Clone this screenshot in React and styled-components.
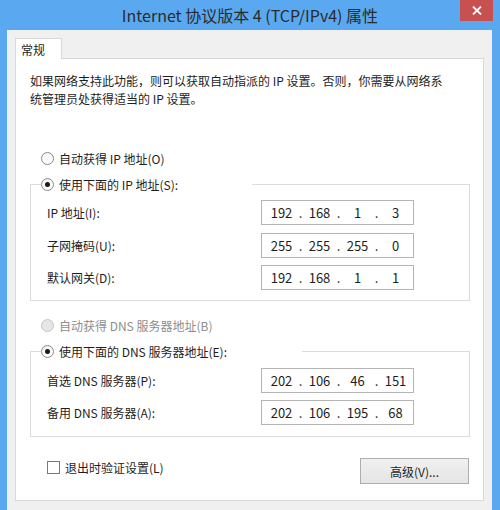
import styled, { createGlobalStyle } from "styled-components";

const FONT = `"Segoe UI", "Noto Sans CJK SC", "Noto Sans", sans-serif`;

const GlobalStyle = createGlobalStyle`
    html, body {
        margin: 0;
        padding: 0;
        background: #5aa9f0;
    }
    body {
        font-family: ${FONT};
        font-size: 12px;
        color: #1e1e1e;
    }
`;

const Window = styled.div`
    width: 500px;
    height: 510px;
    display: flex;
    flex-direction: column;
    background: #5aa9f0;
    overflow: hidden;
`;

const TitleBar = styled.div`
    position: relative;
    height: 30px;
    flex-shrink: 0;
    display: flex;
    align-items: center;
    justify-content: center;
`;

const TitleText = styled.span`
    font-size: 16px;
    color: #2b2b2b;
    margin-top: -1px;
    white-space: nowrap;
`;

const CloseButton = styled.div`
    position: absolute;
    top: 0;
    right: 7px;
    width: 33px;
    height: 21px;
    background: #c75050;
    display: flex;
    align-items: center;
    justify-content: center;

    svg {
        width: 10px;
        height: 9px;
    }
`;

const Client = styled.div`
    flex: 1;
    margin: 0 8px 0 7px;
    padding: 8px 8px 9px 8px;
    background: #f0f0f0;
    display: flex;
    flex-direction: column;
`;

const TabStrip = styled.div`
    display: flex;
    margin-bottom: -1px;
    position: relative;
    z-index: 1;
`;

const Tab = styled.div`
    width: 40px;
    height: 20px;
    padding-left: 5px;
    background: #fff;
    border: 1px solid #d9d9d9;
    border-bottom: none;
    font-size: 12px;
    line-height: 22px;
`;

const Panel = styled.div`
    flex: 1;
    background: #fff;
    border: 1px solid #d9d9d9;
    padding: 13px 13px 16px 14px;
    display: flex;
    flex-direction: column;
`;

const Intro = styled.p`
    margin: 0 0 41px 0;
    line-height: 18px;
    font-size: 12px;
`;

const OptionRow = styled.label`
    display: flex;
    align-items: center;
    height: 18px;
    padding-left: 11px;
    margin-top: ${(p) => p.$gap || 0}px;
    color: ${(p) => (p.$disabled ? "#8d8d8d" : "#1e1e1e")};
    white-space: nowrap;
`;

const RadioDot = styled.span`
    width: 11px;
    height: 11px;
    border-radius: 50%;
    border: 1px solid ${(p) => (p.$disabled ? "#c4c4c4" : "#8a8a8a")};
    background: ${(p) =>
        p.$disabled ? "#e6e6e6" : "linear-gradient(#f4f4f4, #ffffff)"};
    margin-right: 5px;
    display: flex;
    align-items: center;
    justify-content: center;
    flex-shrink: 0;

    &::after {
        content: "";
        width: 5px;
        height: 5px;
        border-radius: 50%;
        background: #1a1a1a;
        display: ${(p) => (p.$checked ? "block" : "none")};
    }
`;

const Group = styled.fieldset`
    margin: 8px 0 0 0;
    padding: ${(p) => p.$pt}px 0 ${(p) => p.$pb}px 0;
    border: 1px solid #dcdcdc;
    min-inline-size: 0;
    display: flex;
    flex-direction: column;
    gap: ${(p) => p.$rowGap}px;
`;

const GroupLegend = styled.legend`
    padding: 0;
    margin-left: 10px;
    width: ${(p) => p.$width}px;
    height: 18px;
    display: flex;
    align-items: center;
    background: #fff;
    white-space: nowrap;
`;

const FieldRow = styled.div`
    display: flex;
    align-items: center;
    height: 25px;
    padding-left: 16px;
`;

const FieldLabel = styled.span`
    width: 214px;
    flex-shrink: 0;
`;

const IpBox = styled.div`
    box-sizing: border-box;
    width: 153px;
    height: 25px;
    border: 1px solid #b4b4b4;
    display: flex;
    align-items: center;
    padding-left: 4px;
    font-size: 13px;
    color: #1e1e1e;
`;

const Octet = styled.span`
    width: 31px;
    text-align: center;
`;

const Dot = styled.span`
    width: 7px;
    text-align: center;
`;

const Footer = styled.div`
    display: flex;
    justify-content: space-between;
    align-items: flex-start;
    margin-top: 21px;
    padding-left: 17px;
    padding-right: 1px;
`;

const CheckRow = styled.label`
    display: flex;
    align-items: center;
    height: 18px;
`;

const CheckBox = styled.span`
    width: 11px;
    height: 11px;
    border: 1px solid #7a7a7a;
    background: #fff;
    margin-right: 5px;
    flex-shrink: 0;
`;

const Button = styled.div`
    width: 109px;
    height: 26px;
    box-sizing: border-box;
    border: 1px solid #adadad;
    background: linear-gradient(#f0f0f0, #e5e5e5);
    display: flex;
    align-items: center;
    justify-content: center;
    font-size: 12px;
`;

function IpAddress({ value }) {
    const parts = value.split(".");
    return (
        <IpBox>
            {parts.map((part, i) => (
                <span key={i} style={{ display: "contents" }}>
                    <Octet>{part}</Octet>
                    {i < parts.length - 1 && <Dot>.</Dot>}
                </span>
            ))}
        </IpBox>
    );
}

const IP_FIELDS = [
    ["IP 地址(I):", "192.168.1.3"],
    ["子网掩码(U):", "255.255.255.0"],
    ["默认网关(D):", "192.168.1.1"],
];

const DNS_FIELDS = [
    ["首选 DNS 服务器(P):", "202.106.46.151"],
    ["备用 DNS 服务器(A):", "202.106.195.68"],
];

export default function App() {
    return (
        <>
            <GlobalStyle />
            <Window>
                <TitleBar>
                    <TitleText>Internet 协议版本 4 (TCP/IPv4) 属性</TitleText>
                    <CloseButton aria-label="关闭">
                        <svg viewBox="0 0 10 9" fill="none" stroke="#fff" strokeWidth="1.8">
                            <path d="M1 0.5 L9 8.5 M9 0.5 L1 8.5" />
                        </svg>
                    </CloseButton>
                </TitleBar>
                <Client>
                    <TabStrip>
                        <Tab>常规</Tab>
                    </TabStrip>
                    <Panel>
                        <Intro>
                            如果网络支持此功能，则可以获取自动指派的 IP 设置。否则，你需要从网络系
                            <br />
                            统管理员处获得适当的 IP 设置。
                        </Intro>

                        <OptionRow>
                            <RadioDot />
                            自动获得 IP 地址(O)
                        </OptionRow>
                        <Group $pt={7} $pb={10} $rowGap={7.5}>
                            <GroupLegend $width={211}>
                                <RadioDot $checked />
                                使用下面的 IP 地址(S):
                            </GroupLegend>
                            {IP_FIELDS.map(([label, value]) => (
                                <FieldRow key={label}>
                                    <FieldLabel>{label}</FieldLabel>
                                    <IpAddress value={value} />
                                </FieldRow>
                            ))}
                        </Group>

                        <OptionRow $gap={15} $disabled>
                            <RadioDot $disabled />
                            自动获得 DNS 服务器地址(B)
                        </OptionRow>
                        <Group $pt={8} $pb={11} $rowGap={7}>
                            <GroupLegend $width={261}>
                                <RadioDot $checked />
                                使用下面的 DNS 服务器地址(E):
                            </GroupLegend>
                            {DNS_FIELDS.map(([label, value]) => (
                                <FieldRow key={label}>
                                    <FieldLabel>{label}</FieldLabel>
                                    <IpAddress value={value} />
                                </FieldRow>
                            ))}
                        </Group>

                        <Footer>
                            <CheckRow>
                                <CheckBox />
                                退出时验证设置(L)
                            </CheckRow>
                            <Button>高级(V)...</Button>
                        </Footer>
                    </Panel>
                </Client>
            </Window>
        </>
    );
}
